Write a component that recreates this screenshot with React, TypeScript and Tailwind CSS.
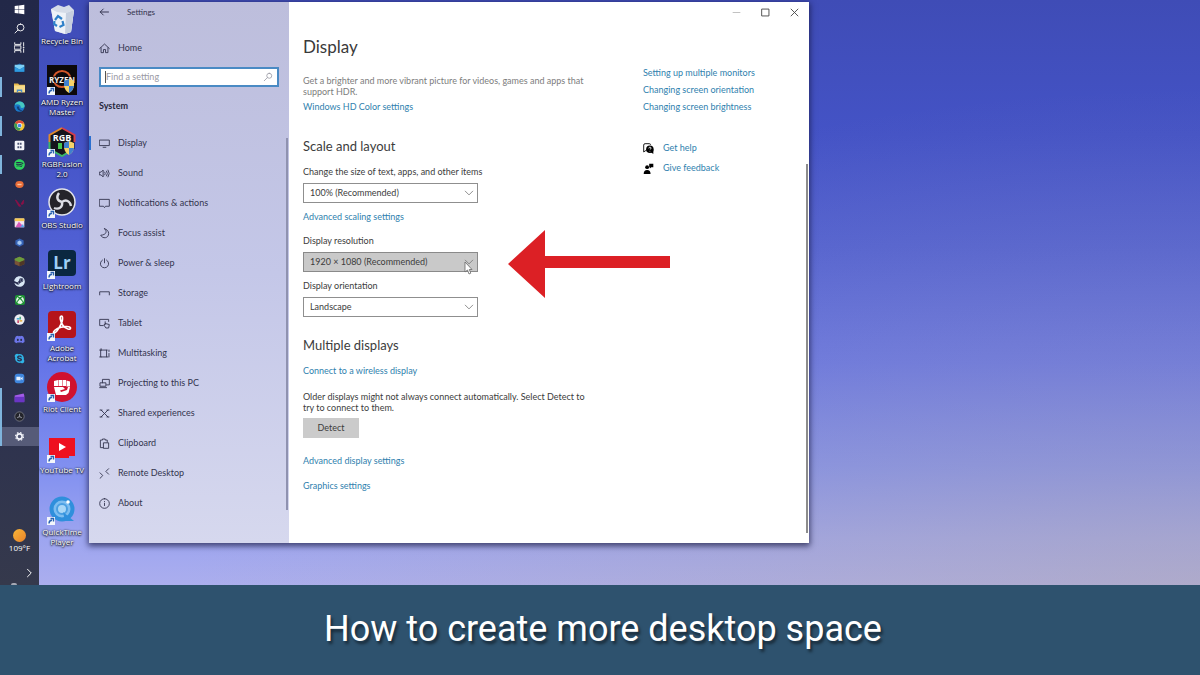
import type { ReactNode } from "react";
import {
  FaDiscord,
  FaSkype,
  FaSpotify,
  FaSteam,
  FaWindows,
  FaXbox,
} from "react-icons/fa";

const stroke = {
  fill: "none",
  stroke: "currentColor",
  strokeLinecap: "round",
  strokeLinejoin: "round",
} as const;

function Line({ children, size = 11 }: { children: ReactNode; size?: number }) {
  return (
    <svg width={size} height={size} viewBox="0 0 16 16" strokeWidth={1.3} className="shrink-0" aria-hidden="true" {...stroke}>
      {children}
    </svg>
  );
}

const navItems: { label: string; icon: ReactNode }[] = [
  { label: "Display", icon: <path d="M1 3h14v8H1zM6 13.5h4" /> },
  { label: "Sound", icon: <path d="M1 6h2l3-3v10l-3-3H1zM8.500 6q1.400 2 0 4M11 4.500q2.600 3.500 0 7M13.200 3q3.600 5 0 10" /> },
  { label: "Notifications & actions", icon: <path d="M1 2h14v10H9.500L8 14l-1.500-2H1z" /> },
  { label: "Focus assist", icon: <path d="M8 1c4 3 3.500 9-5.500 9.500C5 16 14 15.500 14 8c0-3.500-2.500-6-6-7z" /> },
  { label: "Power & sleep", icon: <path d="M8 1v6M5 3a6 6 0 1 0 6 0" /> },
  { label: "Storage", icon: <path d="M1 10V5.500h14V10" /> },
  { label: "Tablet", icon: <path d="M6 11H1V2h13v3M9 9V5.500M9 9l-2 1 3 4.500h4l1-5-6-1.500" /> },
  { label: "Multitasking", icon: <path d="M3 3h8v10H3zM1 3h2M1 13h2M11 13h2M3 1v2M14.500 3v2M14.500 8v5M11 3h1" /> },
  { label: "Projecting to this PC", icon: <path d="M5 7V2h10v8h-4M2 7h8v5H2zM1 14h10" /> },
  { label: "Shared experiences", icon: <path d="M3 3l10 10M13 3L3 13M1.500 3h3M11.500 3h3M1.500 13h3M11.500 13h3" /> },
  { label: "Clipboard", icon: <path d="M6 14H2V3h3V1.500h4V3h3v3M7 7h7v8H7z" /> },
  { label: "Remote Desktop", icon: <path d="M1.500 7l4 4-4 4M14 1l-4 4 4 4" /> },
  { label: "About", icon: <path d="M8 1a7 7 0 1 0 0 14A7 7 0 0 0 8 1zM8 7.500V11M8 5v.2" /> },
];

const startButtons: { name: string; icon: ReactNode }[] = [
  { name: "Start", icon: <FaWindows size={11} /> },
  {
    name: "Search",
    icon: (
      <Line>
        <path d="M9.500 1.500a5 5 0 1 0 0 10 5 5 0 0 0 0-10zM6 10l-4.500 4.500" />
      </Line>
    ),
  },
  {
    name: "Task view",
    icon: (
      <Line>
        <path d="M1 1v2.500h9V1M1 15v-2.500h9V15M1 5.500h9v5H1zM14 1v5M14 10v5M13.500 8h1" />
      </Line>
    ),
  },
];

function Tile({ children }: { children: ReactNode }) {
  return (
    <svg width={11} height={11} viewBox="0 0 16 16" aria-hidden="true">
      {children}
    </svg>
  );
}

const taskbarApps: { name: string; open?: boolean; active?: boolean; icon: ReactNode }[] = [
  {
    name: "Mail",
    icon: (
      <Tile>
        <path d="M1 6l7-4 7 4v8H1z" fill="#1c6fb5" />
        <path d="M1 4h14v3l-7 4-7-4z" fill="#7fd0f5" />
        <path d="M1 7l7 4 7-4v7H1z" fill="#2f9be0" />
      </Tile>
    ),
  },
  {
    name: "File Explorer",
    open: true,
    icon: (
      <Tile>
        <path d="M0 2h6l1.500 2H16v11H0z" fill="#e8b84a" />
        <path d="M0 5h16v10H0z" fill="#f7dc8b" />
        <path d="M4 15v-4h8v4h-2v-2H6v2z" fill="#4a8fc9" />
      </Tile>
    ),
  },
  {
    name: "Microsoft Edge",
    icon: (
      <Tile>
        <circle cx="8" cy="8" r="7.500" fill="#1b78c8" />
        <path d="M1 6C3-1 14-1 15.500 7c0 3-4 4-6 2.500C11 6 5 3 1 6z" fill="#46c8c0" />
        <path d="M4 8c0 5 5 8 9 5.500C9 14 7 11 7.500 8z" fill="#113f7c" />
      </Tile>
    ),
  },
  {
    name: "Google Chrome",
    open: true,
    icon: (
      <Tile>
        <circle cx="8" cy="8" r="7.500" fill="#f2c434" />
        <path d="M8 8L1.500 4.200A7.500 7.500 0 0 1 14.800 5H8z" fill="#e0483a" />
        <path d="M8 8L1.500 4.200A7.500 7.500 0 0 0 7.500 15.500L11 9z" fill="#3a9d56" />
        <circle cx="8" cy="8" r="3.600" fill="#fff" />
        <circle cx="8" cy="8" r="2.700" fill="#4a86e8" />
      </Tile>
    ),
  },
  {
    name: "Microsoft Store",
    icon: (
      <Tile>
        <rect x="1" y="1" width="14" height="14" rx="2" fill="#f4f5fa" />
        <path d="M5 4h2.500v3H5zM8.500 4H11v3H8.500zM5 9h2.500v3H5zM8.500 9H11v3H8.500z" fill="#4d5575" />
      </Tile>
    ),
  },
  { name: "Spotify", open: true, icon: <FaSpotify size={11} color="#2ed45f" /> },
  {
    name: "Origin",
    icon: (
      <Tile>
        <ellipse cx="8" cy="8" rx="6" ry="5" fill="#e96d38" />
        <path d="M5 7h6v2H5z" fill="#f8c5a0" />
      </Tile>
    ),
  },
  {
    name: "Valorant",
    icon: (
      <Tile>
        <path d="M2 3l5 9h3L3 3zM14 3l-4 6h3l1-2z" fill="#8d1048" stroke="#8d1048" />
      </Tile>
    ),
  },
  {
    name: "Photos",
    icon: (
      <Tile>
        <rect x="1" y="2" width="14" height="13" rx="1" fill="#f4e3ef" />
        <path d="M1 2h14v4H1z" fill="#f7ca52" />
        <path d="M2 15l5-8 8 8z" fill="#d657b8" />
        <path d="M9 15l4-5 2 5z" fill="#59a6ec" />
      </Tile>
    ),
  },
  {
    name: "Signal",
    icon: (
      <Tile>
        <path d="M8 2l6 3v6l-6 3-6-3V5z" fill="#3562b5" />
        <path d="M8 5l3 2v3l-3 1.500L5 10V7z" fill="#a6c8f2" />
      </Tile>
    ),
  },
  {
    name: "Minecraft",
    icon: (
      <Tile>
        <path d="M1 4l7-3 7 3v8l-7 3-7-3z" fill="#7a5337" />
        <path d="M1 4l7-3 7 3v2L8 9 1 6z" fill="#6c9c3c" />
        <path d="M8 9l7-3v6l-7 3z" fill="#4f3726" />
      </Tile>
    ),
  },
  { name: "Steam", icon: <FaSteam size={11} color="#d9e7f5" /> },
  {
    name: "Xbox",
    icon: (
      <span className="flex size-[10px] items-center justify-center rounded-xs bg-[#1e8f35]">
        <FaXbox size={8} color="#e8f7ea" />
      </span>
    ),
  },
  {
    name: "Slack",
    icon: (
      <Tile>
        <circle cx="8" cy="8" r="7.500" fill="#ecedf2" />
        <path d="M4 7h4" stroke="#36a3d8" strokeWidth="2" />
        <path d="M9 4v4" stroke="#35a46b" strokeWidth="2" />
        <path d="M8 10h4" stroke="#e2a42c" strokeWidth="2" />
        <path d="M6 9v4" stroke="#c32a55" strokeWidth="2" />
      </Tile>
    ),
  },
  { name: "Discord", icon: <FaDiscord size={11} color="#6d76ea" /> },
  { name: "Skype", icon: <FaSkype size={11} color="#2fb3e6" /> },
  {
    name: "Zoom",
    icon: (
      <Tile>
        <rect x="1" y="1" width="14" height="14" rx="4" fill="#3f86dd" />
        <path d="M3.500 5.500h6v5h-6zM10 7.500l2.500-2v5L10 8.500z" fill="#e9f3ff" />
      </Tile>
    ),
  },
  {
    name: "Video Editor",
    open: true,
    icon: (
      <Tile>
        <path d="M1 5l13-3 1 3v9H1z" fill="#a35ce8" />
        <path d="M1 7h14v8H1z" fill="#6a35c4" />
      </Tile>
    ),
  },
  {
    name: "OBS Studio",
    open: true,
    icon: (
      <Tile>
        <circle cx="8" cy="8" r="6.800" fill="#23242b" stroke="#8b8d98" />
        <path d="M8 8V4M8 8l-3.500 2M8 8l3.500 2" stroke="#8b8d98" strokeWidth="1.500" />
      </Tile>
    ),
  },
  {
    name: "Settings",
    open: true,
    active: true,
    icon: (
      <Tile>
        <circle cx="8" cy="8" r="3.800" fill="none" stroke="#f2f4fa" strokeWidth="2.400" />
        <circle cx="8" cy="8" r="5.800" fill="none" stroke="#f2f4fa" strokeWidth="1.600" strokeDasharray="2.300 2.250" />
      </Tile>
    ),
  },
];

function Shield() {
  return (
    <g>
      <path d="M17 16l5-2 5 2v5q-1 5-5 7-4-2-5-7z" fill="#f5d36a" />
      <path d="M22 14l-5 2v5h5zM22 21h5q-1 5-5 7z" fill="#3f80cf" />
    </g>
  );
}

function Shortcut() {
  return (
    <g>
      <path d="M0 22h8v8H0z" fill="#f3f6fb" />
      <path d="M2 28.500q0-3 3-3.200M3.500 23.500h3v3" fill="none" stroke="#2a62b0" strokeWidth="1.400" />
    </g>
  );
}

const desktopIcons: { label: string; art: ReactNode }[] = [
  {
    label: "Recycle Bin",
    art: (
      <g>
        <path d="M4 5l7-4 6 2 5-2 5 5-3 22-6 2-10-3z" fill="#d5dce8" />
        <path d="M4 5l6 3 9 1 8-3-3 22-6 2-10-3z" fill="#eef2f8" />
        <path d="M19 9l8-3-3 22-6 2z" fill="#c6cfdf" />
        <path d="M8 16l3-4 4 3M15.500 17l1 4-4 2M10 22l-3-2 .5-3" fill="none" stroke="#2f80c9" strokeWidth="2.200" />
      </g>
    ),
  },
  {
    label: "AMD Ryzen Master",
    art: (
      <g>
        <path d="M0 0h30v30H0z" fill="#0c090b" />
        <ellipse cx="15" cy="14" rx="8.500" ry="8" fill="none" stroke="#d4582a" strokeWidth="2" />
        <path d="M0 11.500h30v6H0z" fill="#0c090b" />
        <text x="15" y="17.500" textAnchor="middle" fontSize="8" fontWeight="bold" fill="#f4f0ee">RYZEN</text>
        <Shield />
        <Shortcut />
      </g>
    ),
  },
  {
    label: "RGBFusion 2.0",
    art: (
      <g>
        <path d="M15 1l12.500 7v14L15 29 2.500 22V8z" fill="#15141c" />
        <path d="M2.500 15V8L15 1" fill="none" stroke="#de8a2d" strokeWidth="2" />
        <path d="M15 1l12.500 7v7" fill="none" stroke="#d63d4b" strokeWidth="2" />
        <path d="M2.500 15v7L15 29l6-3.500" fill="none" stroke="#3bb868" strokeWidth="2" />
        <text x="15" y="14" textAnchor="middle" fontSize="9" fontWeight="bold" fill="#fff">RGB</text>
        <path d="M11 16h4v6h-4z" fill="#45c552" />
        <Shield />
        <Shortcut />
      </g>
    ),
  },
  {
    label: "OBS Studio",
    art: (
      <g>
        <circle cx="15" cy="14" r="13" fill="#25242a" stroke="#e3e4ea" strokeWidth="1.500" />
        <path d="M15 14c-5-1-6-5-3-9M15 14c4-3 8-1 9 4M15 14c1 5-3 8-8 6" fill="none" stroke="#dcdde4" strokeWidth="2.400" />
        <Shortcut />
      </g>
    ),
  },
  {
    label: "Lightroom",
    art: (
      <g>
        <rect x="1" y="1" width="28" height="26" rx="4" fill="#0a2740" />
        <text x="15" y="20" textAnchor="middle" fontSize="17" fontWeight="bold" fill="#9fd0f5">Lr</text>
        <Shortcut />
      </g>
    ),
  },
  {
    label: "Adobe Acrobat",
    art: (
      <g>
        <rect x="1" y="0" width="28" height="27" rx="4" fill="#b5141a" />
        <path
          d="M14.500 5c-2.500 0-1 6 1.500 9.500s8 5 7.500 2.500-9-1.500-13 .5-5 5-3 4.500S16 12 15.500 7q0-2-1-2z"
          fill="none"
          stroke="#fff"
          strokeWidth="1.700"
        />
        <Shortcut />
      </g>
    ),
  },
  {
    label: "Riot Client",
    art: (
      <g>
        <circle cx="15" cy="15" r="15" fill="#d0112f" />
        <path d="M7 9l4-1v6H7zM11.500 8h3.500v6h-3.500zM15.500 8H19v6h-3.500zM19.500 8.500l3.500 1v5h-3.500zM7 15h9l2 2-5 1.500 1 1.500 6-2 1-3h2l-1.500 6L19 23H9z" fill="#fff" />
        <Shortcut />
      </g>
    ),
  },
  {
    label: "YouTube TV",
    art: (
      <g>
        <path d="M2 5h26v18H2zM8 23h14v2H8z" fill="#ee1020" />
        <path d="M12 10l7 4-7 4z" fill="#fff" />
        <Shortcut />
      </g>
    ),
  },
  {
    label: "QuickTime Player",
    art: (
      <g>
        <circle cx="15" cy="14" r="10.500" fill="#7dbdf0" stroke="#2f8fdc" strokeWidth="4" />
        <circle cx="15" cy="14" r="5" fill="#a9d7f7" stroke="#4a9fe2" strokeWidth="2" />
        <path d="M16 17l11 9h-9z" fill="#2f8fdc" />
        <circle cx="21" cy="7" r="1.800" fill="#fff" />
        <Shortcut />
      </g>
    ),
  },
];

function Taskbar() {
  return (
    <nav className="flex w-[39px] shrink-0 flex-col bg-linear-to-b from-[#222848] via-[#282d50] to-[#35394c] text-white">
      {startButtons.map((b) => (
        <button key={b.name} aria-label={b.name} className="flex h-[19px] shrink-0 items-center justify-center">
          {b.icon}
        </button>
      ))}
      <div className="mt-px grid h-[388px] shrink-0 auto-rows-fr">
        {taskbarApps.map((app) => (
          <button
            key={app.name}
            aria-label={app.name}
            className={`flex items-center justify-center border-x-2 border-r-transparent ${
              app.open ? "border-l-[#7fb4dc]" : "border-l-transparent"
            } ${app.active ? "bg-[#565b78]" : ""}`}
          >
            {app.icon}
          </button>
        ))}
      </div>
      <div className="mt-auto flex flex-col items-center text-[8px] leading-[10px]">
        <span className="size-[13px] rounded-full bg-linear-to-br from-[#f9b738] to-[#e8812a]" />
        <span className="mt-px">109°F</span>
        <button aria-label="Show hidden icons" className="mt-[14px] mr-1 self-end">
          <Line size={12}>
            <path d="M6 3l5 5-5 5" />
          </Line>
        </button>
        <span className="mt-1 mr-3 h-[2px] w-[6px] rounded-t-full bg-[#a5a8b4]" />
      </div>
    </nav>
  );
}

function DesktopIcons() {
  return (
    <ul className="mt-1 grid h-[552px] w-[50px] shrink-0 auto-rows-fr pr-1">
      {desktopIcons.map((d) => (
        <li key={d.label} className="flex flex-col items-center">
          <svg width={30} height={30} viewBox="0 0 30 30" className="shrink-0" aria-hidden="true">
            {d.art}
          </svg>
          <span className="mt-[2px] text-center text-[8px] leading-[10px] text-white [text-shadow:0_1px_2px_#000,0_0_2px_#000]">
            {d.label}
          </span>
        </li>
      ))}
    </ul>
  );
}

function Sidebar() {
  return (
    <aside className="flex w-[200px] shrink-0 flex-col bg-linear-to-b from-[#bdbedc] via-[#c4c7e8] to-[#d6d8ee] text-[#33344e]">
      <div className="flex h-5 items-center gap-[17px] pl-[9px] text-[8px]">
        <button aria-label="Back">
          <Line size={12}>
            <path d="M14 8H3M7 4L3 8l4 4" />
          </Line>
        </button>
        Settings
      </div>
      <a href="#home" className="mt-5 flex items-center gap-2 pl-[10px] leading-3">
        <Line>
          <path d="M1 8l7-6.500L15 8M3 7v7h3.500V9.500h3V14H13V7" />
        </Line>
        Home
      </a>
      <label className="mx-[10px] mt-[13px] flex h-5 items-center border-2 border-[#4a8ac4] bg-white px-1 text-[#9a9aa4]">
        <span className="h-3 w-px bg-[#555]" />
        <input
          type="text"
          aria-label="Find a setting"
          placeholder="Find a setting"
          className="min-w-0 flex-1 outline-none placeholder:text-[#9a9aa4]"
        />
        <Line size={10}>
          <path d="M10 2a4 4 0 1 0 0 8 4 4 0 0 0 0-8zM7 9l-5 5" />
        </Line>
      </label>
      <h2 className="mt-[13px] pl-[10px] leading-3 font-bold text-[#26273c]">System</h2>
      <div className="mt-4 flex">
        <ul className="flex-1">
          {navItems.map((item, i) => (
            <li key={item.label}>
              <a href="#settings" className="flex h-[30px] items-center">
                <span className={`h-[14px] w-[2px] ${i === 0 ? "bg-[#2b6fd0]" : ""}`} />
                <span className="mr-2 ml-2 flex">
                  <Line>{item.icon}</Line>
                </span>
                {item.label}
              </a>
            </li>
          ))}
        </ul>
        <span className="mt-[10px] mr-px mb-[8px] w-[2px] bg-[#8f92b0]" />
      </div>
    </aside>
  );
}

function Dropdown({ id, label, value, pressed }: { id: string; label: string; value: string; pressed?: boolean }) {
  return (
    <div className="w-[175px]">
      <label htmlFor={id} className="block leading-3 whitespace-nowrap">
        {label}
      </label>
      <div className="relative mt-[5px]">
        <select
          id={id}
          className={`h-5 w-full appearance-none border pl-[6px] outline-none ${
            pressed ? "border-[#8a8a8a] bg-[#c9c9c9]" : "border-[#8f8f8f] bg-white"
          }`}
        >
          <option>{value}</option>
        </select>
        <span className="pointer-events-none absolute top-[5px] right-1 text-[#777]">
          <Line size={10}>
            <path d="M2 5l6 6 6-6" />
          </Line>
        </span>
        {pressed && (
          <svg width={9} height={14} viewBox="0 0 9 14" className="pointer-events-none absolute top-[9px] right-[5px]" aria-hidden="true">
            <path d="M1 1v10l2.500-2 1.500 4 1.800-.8L5.300 8.500H8z" fill="#fff" stroke="#666" strokeWidth=".8" />
          </svg>
        )}
      </div>
    </div>
  );
}

function TextLink({ children }: { children: ReactNode }) {
  return (
    <a href="#link" className="block w-fit leading-3 text-[#2f7fae]">
      {children}
    </a>
  );
}

function DisplayPage() {
  return (
    <main className="w-[290px] shrink-0 pt-[13px]">
      <h1 className="text-[17px] leading-6 text-[#3a3a3a]">Display</h1>
      <p className="mt-4 leading-[11px] whitespace-nowrap text-[#7d7d7d]">
        Get a brighter and more vibrant picture for videos, games and apps that
        <br />
        support HDR.
      </p>
      <div className="mt-1">
        <TextLink>Windows HD Color settings</TextLink>
      </div>

      <h2 className="mt-6 mb-[11px] text-[13px] leading-[18px]">Scale and layout</h2>
      <Dropdown id="scale" label="Change the size of text, apps, and other items" value="100% (Recommended)" />
      <div className="mt-2 mb-3">
        <TextLink>Advanced scaling settings</TextLink>
      </div>
      <div className="flex flex-col gap-2">
        <Dropdown id="resolution" label="Display resolution" value="1920 × 1080 (Recommended)" pressed />
        <Dropdown id="orientation" label="Display orientation" value="Landscape" />
      </div>

      <h2 className="mt-[19px] mb-[11px] text-[13px] leading-[18px]">Multiple displays</h2>
      <TextLink>Connect to a wireless display</TextLink>
      <p className="mt-[14px] leading-[11px] whitespace-nowrap">
        Older displays might not always connect automatically. Select Detect to
        <br />
        try to connect to them.
      </p>
      <button className="mt-[5px] mb-[17px] block h-5 w-14 bg-[#cbcbcb]">Detect</button>
      <div className="flex flex-col gap-[13px]">
        <TextLink>Advanced display settings</TextLink>
        <TextLink>Graphics settings</TextLink>
      </div>
    </main>
  );
}

function RelatedLinks() {
  return (
    <aside className="ml-auto w-[163px] pt-[45px]">
      <div className="flex flex-col gap-[5px]">
        <TextLink>Setting up multiple monitors</TextLink>
        <TextLink>Changing screen orientation</TextLink>
        <TextLink>Changing screen brightness</TextLink>
      </div>
      <div className="mt-[29px] flex flex-col gap-2 text-black">
        <div className="flex items-center gap-[9px]">
          <svg width={11} height={11} viewBox="0 0 16 16" aria-hidden="true">
            <path d="M5 11H4l-3 2V3q0-2 2-2h6q2 0 2 1.500" fill="none" stroke="currentColor" strokeWidth="1.300" />
            <circle cx="10" cy="9" r="5.500" fill="currentColor" />
            <path d="M11 13l4 3v-6z" fill="currentColor" />
            <path d="M8.500 8q0-2 1.600-2t1.500 1.500-1.600 2M10 11.500v.8" fill="none" stroke="#fff" strokeWidth="1.200" />
          </svg>
          <TextLink>Get help</TextLink>
        </div>
        <div className="flex items-center gap-[9px]">
          <svg width={11} height={11} viewBox="0 0 16 16" fill="currentColor" aria-hidden="true">
            <circle cx="6" cy="6" r="2.800" />
            <path d="M1 16q0-6 5-6t5 6zM9 1h6v5h-3l-2 2V6H9z" />
          </svg>
          <TextLink>Give feedback</TextLink>
        </div>
      </div>
    </aside>
  );
}

function SettingsWindow() {
  return (
    <section className="mt-[2px] mb-[42px] flex w-[60vw] min-w-[660px] shrink-0 font-[Lato,'Noto_Sans',sans-serif] text-[9px] text-[#3c3c3c] shadow-[0_2px_6px_1px_rgba(20,20,60,0.7)]">
      <Sidebar />
      <div className="flex min-w-0 flex-1 flex-col bg-white">
        <div className="flex h-5 items-center justify-end gap-[18px] pr-[9px] text-[#444]">
          <button aria-label="Minimize" className="text-[#bbb]">
            <Line>
              <path d="M3 8h10" />
            </Line>
          </button>
          <button aria-label="Maximize">
            <Line>
              <path d="M3 3h10v10H3z" />
            </Line>
          </button>
          <button aria-label="Close">
            <Line>
              <path d="M3 3l10 10M13 3L3 13" />
            </Line>
          </button>
        </div>
        <div className="flex flex-1 pl-[14px]">
          <DisplayPage />
          <RelatedLinks />
          <span className="mt-[142px] mr-px mb-[10px] w-[2px] bg-[#8c8c8c]" />
        </div>
      </div>
    </section>
  );
}

export default function App() {
  return (
    <div className="flex min-h-screen flex-col overflow-hidden font-['Open_Sans','Noto_Sans',sans-serif]">
      <div className="relative flex flex-1 bg-[radial-gradient(ellipse_at_bottom_right,rgba(180,165,150,0.4),transparent_60%),linear-gradient(to_bottom,#3f4cb6_0%,#4453c6_23%,#5060d4_42%,#6474e8_62%,#8190f0_80%,#9da5f0_92%,#abaeee_100%)]">
        <Taskbar />
        <DesktopIcons />
        <SettingsWindow />
        <svg width={162} height={68} viewBox="0 0 162 68" className="absolute top-[230px] left-[508px]" aria-hidden="true">
          <path d="M0 34L37 0v26h125v12H37v30z" fill="#dc2025" />
        </svg>
      </div>
      <footer className="flex h-[90px] items-center justify-center bg-[#2e526e] pb-[2px] pl-[6px]">
        <p className="font-[Roboto,sans-serif] text-[36px] leading-[48px] text-white [text-shadow:2px_3px_3px_rgba(0,0,0,0.5)]">
          How to create more desktop space
        </p>
      </footer>
    </div>
  );
}
